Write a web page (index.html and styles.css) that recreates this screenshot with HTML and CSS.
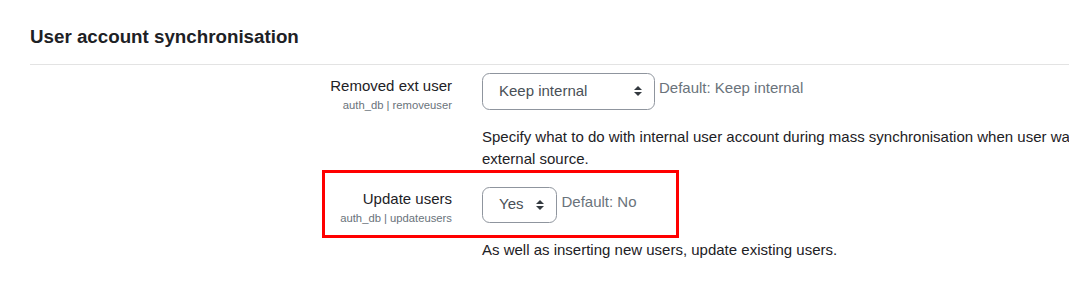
FILE: index.html
```html
<!DOCTYPE html>
<html lang="en">
<head>
<meta charset="utf-8">
<title>User account synchronisation</title>
<link rel="stylesheet" href="styles.css">
</head>
<body>
<div class="page">
  <h3 class="section-title">User account synchronisation</h3>
  <hr class="divider">
  <div class="setting">
    <div class="setting-label">
      <div class="label-name">Removed ext user</div>
      <div class="label-short">auth_db | removeuser</div>
    </div>
    <div class="setting-body">
      <div class="control-line">
        <div class="select select-wide">
          <span>Keep internal</span>
          <svg class="select-arrow" viewBox="0 0 4 5" width="8" height="10"><path d="M2 0L0 2h4zm0 5L0 3h4z" fill="#343a40"/></svg>
        </div>
        <div class="default-info">Default: Keep internal</div>
      </div>
      <div class="description">Specify what to do with internal user account during mass synchronisation when user was removed from external source.</div>
    </div>
  </div>
  <div class="setting setting-highlight">
    <div class="highlight-box"></div>
    <div class="setting-label">
      <div class="label-name">Update users</div>
      <div class="label-short">auth_db | updateusers</div>
    </div>
    <div class="setting-body">
      <div class="control-line">
        <div class="select">
          <span>Yes</span>
          <svg class="select-arrow" viewBox="0 0 4 5" width="8" height="10"><path d="M2 0L0 2h4zm0 5L0 3h4z" fill="#343a40"/></svg>
        </div>
        <div class="default-info">Default: No</div>
      </div>
      <div class="description">As well as inserting new users, update existing users.</div>
    </div>
  </div>
</div>
</body>
</html>
```
FILE: styles.css
```css
html, body {
  margin: 0;
  padding: 0;
  background: #ffffff;
  overflow: hidden;
}

body {
  font-family: "Liberation Sans", Arial, sans-serif;
  font-size: 15px;
  line-height: 22.5px;
  color: #1d2125;
}

.page {
  width: 1172px;
  padding: 26px 0 0 30px;
}

.section-title {
  margin: 0;
  font-size: 18.75px;
  line-height: 22.5px;
  font-weight: 700;
  color: #1d2125;
}

.divider {
  margin: 15px 0 0 0;
  border: 0;
  border-top: 1px solid #e3e3e3;
  height: 0;
}

.setting {
  display: grid;
  grid-template-columns: 422px 720px;
  column-gap: 30px;
  margin-top: 8px;
}

.setting + .setting {
  margin-top: 16px;
}

.setting-highlight {
  position: relative;
}

.highlight-box {
  position: absolute;
  left: 292px;
  top: -17px;
  width: 351px;
  height: 62px;
  border: 3px solid #ff0000;
  pointer-events: none;
}

.setting-label {
  text-align: right;
  padding-top: 2px;
}

.setting-highlight .setting-label {
  padding-top: 1px;
}

.label-name {
  font-size: 15px;
  line-height: 22.5px;
  color: #1d2125;
}

.label-short {
  font-size: 11.25px;
  line-height: 16.9px;
  color: #6a737b;
}

.control-line {
  display: flex;
  align-items: flex-start;
}

.select {
  position: relative;
  box-sizing: border-box;
  height: 36px;
  display: inline-flex;
  align-items: center;
  padding: 0 33px 0 16px;
  border: 1px solid #8f959e;
  border-radius: 7.5px;
  color: #495057;
  font-size: 15px;
  line-height: 22.5px;
  background: #ffffff;
}

.select-wide {
  width: 173px;
  height: 37px;
}

.select-arrow {
  position: absolute;
  right: 12px;
  top: 50%;
  margin-top: -5px;
}

.default-info {
  margin-left: 4px;
  padding-top: 4px;
  color: #6a737b;
  font-size: 15px;
  line-height: 22.5px;
  white-space: nowrap;
}

.description {
  margin-top: 16px;
  font-size: 15px;
  line-height: 22.5px;
  color: #1d2125;
}
```
